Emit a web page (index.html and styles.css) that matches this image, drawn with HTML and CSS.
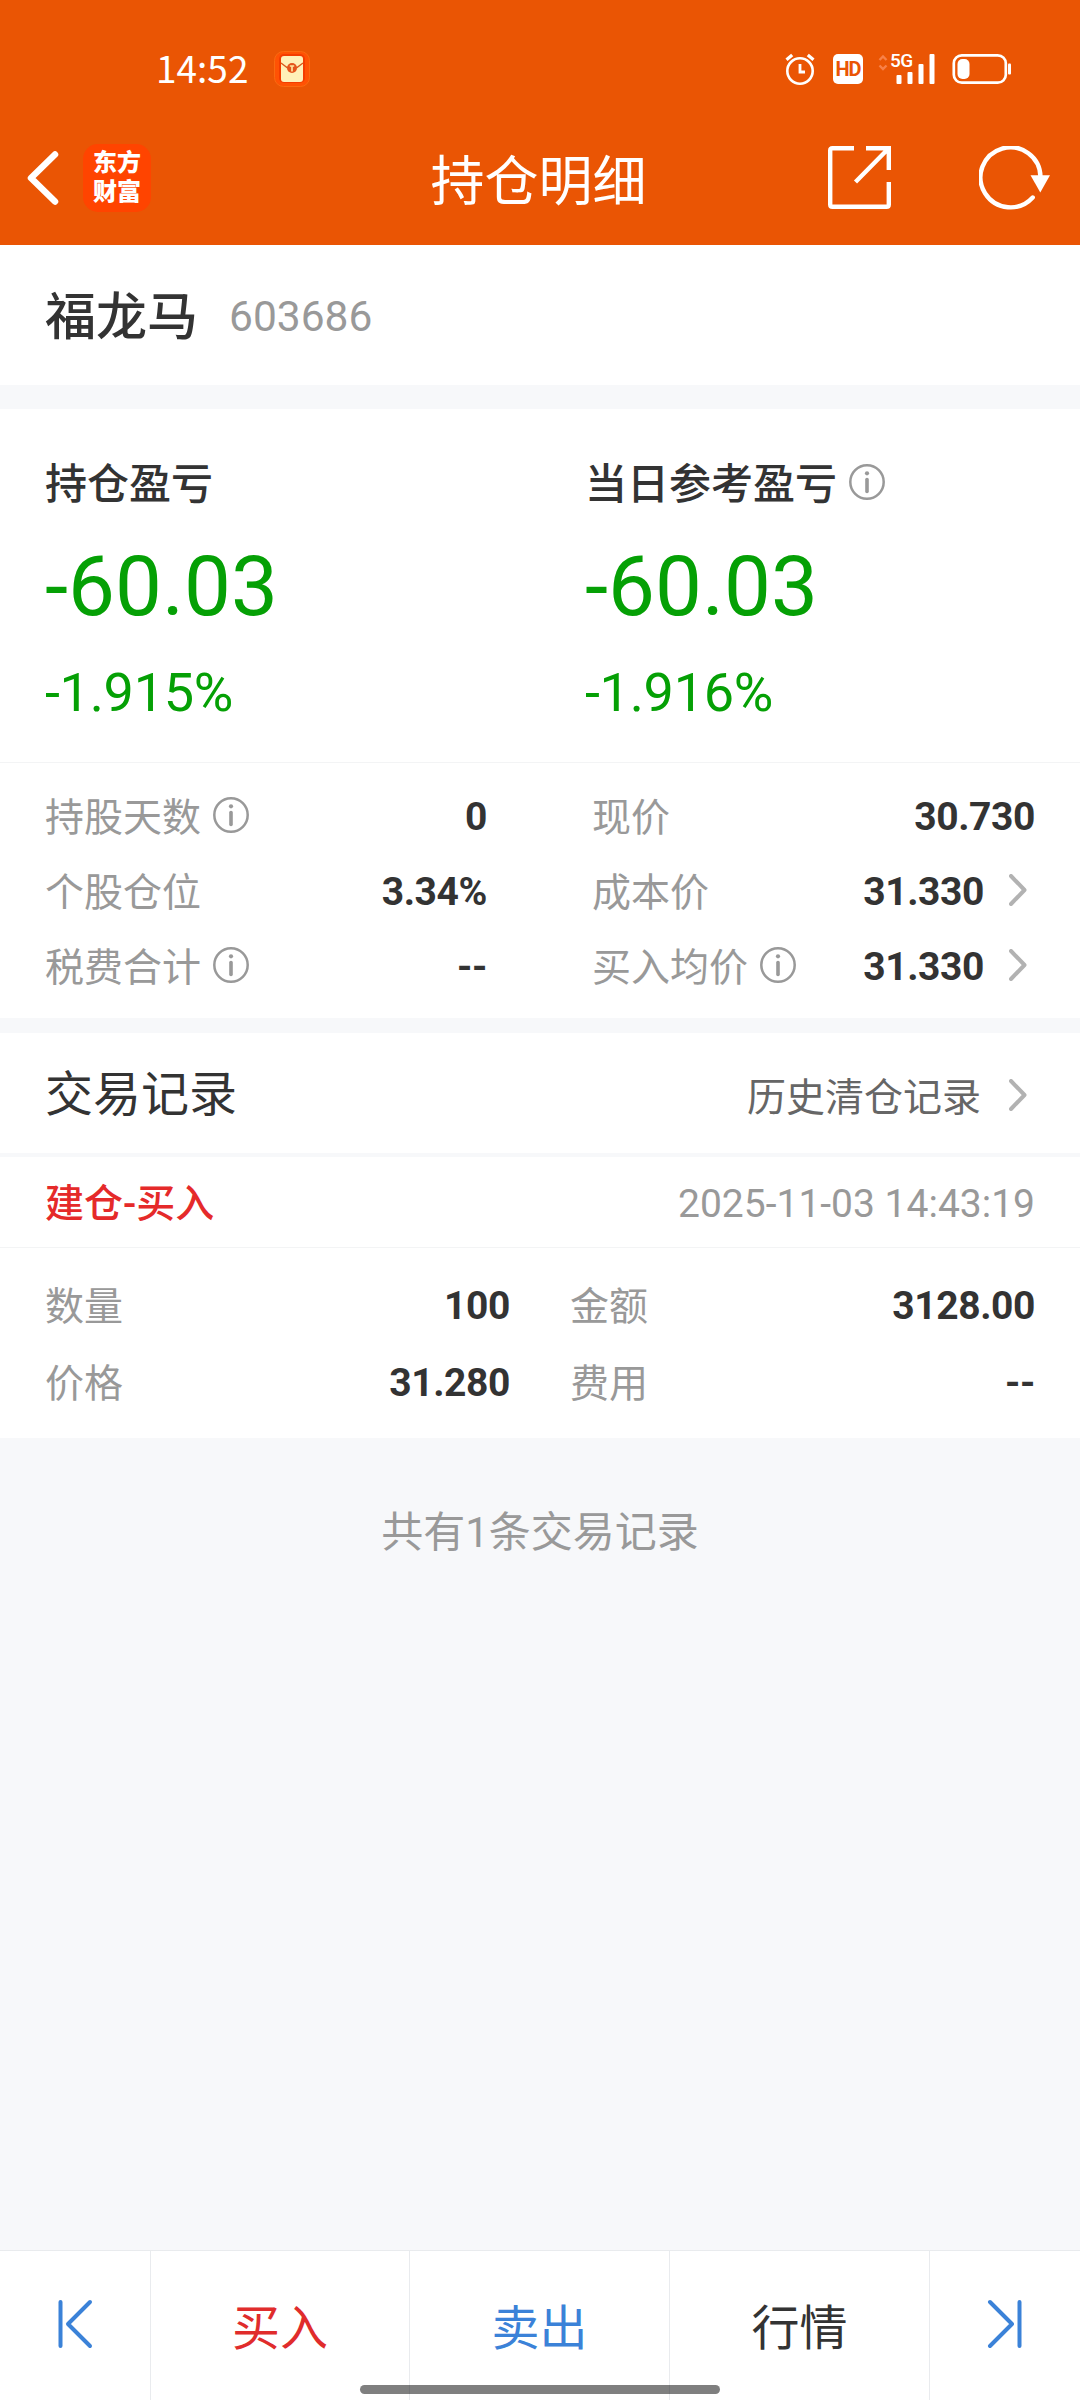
FILE: index.html
```html
<!DOCTYPE html>
<html lang="zh-CN">
<head>
  <meta charset="UTF-8">
  <title>持仓明细</title>
  <meta name="viewport" content="width=device-width, initial-scale=1.0">
  <link rel="stylesheet" href="styles.css">
</head>
<body>

  <!-- Shared icons -->
  <svg class="icon-defs" width="0" height="0">
    <symbol id="icon-info" viewBox="0 0 36 36">
      <circle cx="18" cy="18" r="16.7" fill="none" stroke="#999" stroke-width="2.5"/>
      <circle cx="18" cy="9.3" r="2.1" fill="#999"/>
      <path d="M18 15.5V27.5" stroke="#999" stroke-width="3.6" stroke-linecap="round"/>
    </symbol>
    <symbol id="icon-arrow" viewBox="0 0 18 32">
      <path d="M2 2L15.5 16L2 30" fill="none" stroke="#b2b2b2" stroke-width="4" stroke-linecap="round" stroke-linejoin="round"/>
    </symbol>
  </svg>

  <div class="page">
    <header class="header">
      <div class="status-bar">
        <span class="time">14:52</span>
        <svg class="status-app" width="36" height="36" viewBox="0 0 36 36">
          <rect x=".5" y=".5" width="35" height="35" rx="9" fill="#ff5204" stroke="#fb6a10"/>
          <rect x="5" y="3" width="26" height="29" rx="5" fill="#f43c00"/>
          <rect x="7" y="5" width="22" height="26" rx="3" fill="#fff0b8"/>
          <path d="M7 12L13 16.5H23L29 12" fill="none" stroke="#d8581c" stroke-width="1.3"/>
          <circle cx="18" cy="17" r="5" fill="#e5541c"/>
          <path d="M15.8 15H20.2M18 15V20.5" stroke="#ffe39a" stroke-width="1.7"/>
        </svg>
        <div class="status-icons">
          <svg width="30" height="32" viewBox="0 0 30 32" fill="none" stroke="#fff" stroke-width="2.6">
            <circle cx="15" cy="18" r="12.7"/>
            <path d="M15 11V19H20" stroke-width="2.8"/>
            <path d="M1.5 6.8L7.2 2M28.5 6.8L22.8 2" stroke-width="3.2"/>
          </svg>
          <span class="hd">HD</span>
          <div class="signal">
            <span class="signal-text">5G</span>
            <svg width="58" height="32" viewBox="0 0 58 32">
              <path d="M2.5 7L6 3.5L9.5 7M2.5 12.5L6 16L9.5 12.5" fill="none" stroke="#f88148" stroke-width="2.4"/>
              <g fill="#fff">
                <rect x="19.5" y="22" width="5" height="9" rx="1"/>
                <rect x="30.5" y="19" width="5" height="12" rx="1"/>
                <rect x="41.5" y="11" width="5" height="20" rx="1"/>
                <rect x="52.5" y="1" width="5" height="30" rx="1"/>
              </g>
            </svg>
          </div>
          <svg class="battery" width="59" height="32" viewBox="0 0 59 32">
            <rect x="1.8" y="2.3" width="52" height="27.4" rx="8" fill="none" stroke="#fff" stroke-width="2.7"/>
            <rect x="5.5" y="6" width="12" height="20" rx="5" fill="#fff"/>
            <rect x="56" y="10.5" width="3" height="11" rx="1" fill="#fff"/>
          </svg>
        </div>
      </div>

      <div class="nav-bar">
        <div class="nav-left">
          <svg width="34" height="56" viewBox="0 0 34 56">
            <path d="M29 4.5L5 28L29 51.5" fill="none" stroke="#fff" stroke-width="6.5" stroke-linecap="round" stroke-linejoin="round"/>
          </svg>
          <div class="logo"><span>东方</span><span>财富</span></div>
        </div>
        <h1 class="nav-title">持仓明细</h1>
        <div class="nav-right">
          <svg width="63" height="63" viewBox="0 0 63 63" fill="none" stroke="#fff" stroke-width="4.4">
            <path d="M26 2.2H4.5Q2.2 2.2 2.2 4.5V58.5Q2.2 60.8 4.5 60.8H58.5Q60.8 60.8 60.8 58.5V36"/>
            <path d="M38 2.2H60.8V24M60 3L27.5 36"/>
          </svg>
          <svg width="72" height="64" viewBox="0 0 72 64">
            <path d="M53.7 51.5A30 30 0 1 1 61.5 31" fill="none" stroke="#fff" stroke-width="4.4" stroke-linecap="round"/>
            <path d="M51.5 29.2H71L61.3 46.5Z" fill="#fff"/>
          </svg>
        </div>
      </div>
    </header>

    <section class="stock">
      <span class="stock-name">福龙马</span>
      <span class="stock-code">603686</span>
    </section>

    <section class="profit">
      <div class="profit-item">
        <div class="profit-title">持仓盈亏</div>
        <div class="profit-value">-60.03</div>
        <div class="profit-rate">-1.915%</div>
      </div>
      <div class="profit-item">
        <div class="profit-title">当日参考盈亏<svg class="info"><use href="#icon-info"/></svg></div>
        <div class="profit-value">-60.03</div>
        <div class="profit-rate">-1.916%</div>
      </div>
    </section>

    <section class="details">
      <div class="details-col">
        <div class="row"><span class="label">持股天数<svg class="info"><use href="#icon-info"/></svg></span><span class="value">0</span></div>
        <div class="row"><span class="label">个股仓位</span><span class="value">3.34%</span></div>
        <div class="row"><span class="label">税费合计<svg class="info"><use href="#icon-info"/></svg></span><span class="value">--</span></div>
      </div>
      <div class="details-col">
        <div class="row"><span class="label">现价</span><span class="value">30.730</span></div>
        <div class="row"><span class="label">成本价</span><span class="value">31.330</span><svg class="arrow"><use href="#icon-arrow"/></svg></div>
        <div class="row"><span class="label">买入均价<svg class="info"><use href="#icon-info"/></svg></span><span class="value">31.330</span><svg class="arrow"><use href="#icon-arrow"/></svg></div>
      </div>
    </section>

    <section class="records">
      <div class="records-head">
        <h2>交易记录</h2>
        <span class="history">历史清仓记录</span>
        <svg class="arrow"><use href="#icon-arrow"/></svg>
      </div>
      <div class="record-title">
        <span class="record-type">建仓-买入</span>
        <span class="record-time">2025-11-03 14:43:19</span>
      </div>
      <div class="record-body">
        <div class="row"><span class="label">数量</span><span class="value">100</span></div>
        <div class="row"><span class="label">金额</span><span class="value">3128.00</span></div>
        <div class="row"><span class="label">价格</span><span class="value">31.280</span></div>
        <div class="row"><span class="label">费用</span><span class="value">--</span></div>
      </div>
    </section>

    <p class="total">共有1条交易记录</p>

    <nav class="tab-bar">
      <div class="tab">
        <svg width="36" height="50" viewBox="0 0 36 50" fill="none" stroke="#3b82d8" stroke-width="4" stroke-linecap="round" stroke-linejoin="round">
          <path d="M3.5 3V47M33 3L11 25L33 47"/>
        </svg>
      </div>
      <div class="tab buy">买入</div>
      <div class="tab sell">卖出</div>
      <div class="tab">行情</div>
      <div class="tab">
        <svg width="36" height="50" viewBox="0 0 36 50" fill="none" stroke="#3b82d8" stroke-width="4" stroke-linecap="round" stroke-linejoin="round">
          <path d="M32.5 3V47M3 3L25 25L3 47"/>
        </svg>
      </div>
      <div class="home-indicator"></div>
    </nav>
  </div>

</body>
</html>
```

FILE: styles.css
```css
* {
  box-sizing: border-box;
}
body {
  margin: 0;
  font-family: Roboto, "Noto Sans CJK SC", sans-serif;
  line-height: 1.2;
  color: #333;
  background: #f7f8fa;
}
.icon-defs {
  display: block;
}
.page {
  width: 1080px;
  height: 2400px;
  display: flex;
  flex-direction: column;
}
section {
  background: #fff;
}

/* Header */
.header {
  height: 245px;
  background: #ea5504;
  color: #fff;
}
.status-bar {
  height: 110px;
  padding: 28px 69px 0 156px;
  display: flex;
  align-items: center;
}
.time {
  width: 118px;
  margin-bottom: 5px;
  font-family: "Noto Sans CJK SC", sans-serif;
  font-size: 37px;
  line-height: 40px;
}
.status-icons {
  margin-left: auto;
  display: flex;
  align-items: center;
}
.hd {
  width: 30px;
  height: 30px;
  margin: 0 14px 0 18px;
  border-radius: 5px;
  background: #fff;
  color: #ea5504;
  font: bold 20px/31px Roboto, sans-serif;
  letter-spacing: -1px;
  text-align: center;
}
.signal {
  position: relative;
  width: 58px;
  height: 32px;
}
.signal-text {
  position: absolute;
  left: 13px;
  top: -3px;
  font-size: 19px;
  font-weight: 500;
  letter-spacing: -0.5px;
}
.battery {
  margin-left: 17px;
}
.nav-bar {
  height: 135px;
  padding: 0 29px 0 26px;
  display: grid;
  grid-template-columns: 1fr auto 1fr;
  align-items: center;
}
.nav-left,
.nav-right {
  display: flex;
  align-items: center;
}
.nav-left {
  gap: 23px;
}
.nav-right {
  justify-content: flex-end;
  gap: 88px;
}
.logo {
  width: 68px;
  height: 68px;
  padding-top: 5px;
  border-radius: 15px;
  background: #ff4400;
  font-size: 24px;
  font-weight: 900;
  line-height: 29px;
  text-align: center;
}
.logo span {
  display: block;
}
.nav-title {
  margin: 11px 0 0;
  font-size: 54px;
  font-weight: 400;
  line-height: 64px;
}

/* Stock name */
.stock {
  height: 140px;
  padding: 6px 45px 0;
  display: flex;
  align-items: center;
  gap: 31px;
}
.stock-name {
  font-size: 51px;
  font-weight: 500;
}
.stock-code {
  margin-bottom: 3px;
  font-size: 42.5px;
  color: #999;
}

/* Profit */
.profit {
  height: 354px;
  margin-top: 24px;
  padding-top: 46px;
  display: grid;
  grid-template-columns: 1fr 1fr;
  border-bottom: 1px solid #f3f4f5;
}
.profit-item {
  padding-left: 45px;
}
.profit-title {
  display: flex;
  align-items: center;
  font-size: 42px;
  font-weight: 500;
  line-height: 62px;
  height: 60px;
}
.profit-value {
  margin-top: 24px;
  font-size: 83.5px;
  line-height: 96px;
  color: #05a005;
}
.profit-rate {
  margin-top: 26px;
  font-size: 54px;
  letter-spacing: -0.3px;
  line-height: 64px;
  color: #05a005;
}
.info {
  width: 36px;
  height: 36px;
  margin: 0 0 6px 12px;
}

/* Details */
.details {
  height: 255px;
  padding: 18px 45px 0;
  display: grid;
  grid-template-columns: 442px 443px;
  justify-content: space-between;
}
.row {
  height: 75px;
  display: flex;
  align-items: center;
  font-size: 39px;
}
.label {
  display: flex;
  align-items: center;
  color: #999;
}
.value {
  margin: 0 0 2px auto;
  font-weight: 700;
  letter-spacing: -0.4px;
}
.arrow {
  width: 18px;
  height: 32px;
  margin: 0 8px 7px 25px;
}

/* Records */
.records {
  margin-top: 15px;
}
.records-head {
  height: 124px;
  padding: 4px 45px 0;
  display: flex;
  align-items: center;
  border-bottom: 4px solid #f7f8fa;
}
.records-head h2 {
  margin: 0;
  font-size: 48px;
  font-weight: 400;
}
.records-head .arrow {
  margin-bottom: 1px;
}
.history {
  margin: 6px 3px 0 auto;
  font-size: 39px;
  color: #666;
}
.record-title {
  height: 91px;
  padding: 5px 45px 0;
  display: flex;
  align-items: center;
  justify-content: space-between;
  border-bottom: 1px solid #f3f4f5;
  font-size: 39px;
}
.record-type {
  font-weight: 500;
  color: #e52a2a;
}
.record-time {
  margin-bottom: 1px;
  color: #999;
}
.record-body {
  padding: 21px 45px 15px;
  display: grid;
  grid-template-columns: 465px 465px;
  column-gap: 60px;
}
.record-body .row {
  height: 77px;
}
.total {
  margin: 65px 0 0;
  font-size: 42px;
  line-height: 60px;
  text-align: center;
  color: #999;
}

/* Bottom tabs */
.tab-bar {
  position: relative;
  height: 150px;
  margin-top: auto;
  display: grid;
  grid-template-columns: 151px 259px 260px 260px 150px;
  background: #fff;
  border-top: 1px solid #e9ebee;
}
.tab {
  display: flex;
  align-items: center;
  justify-content: center;
  padding-top: 7px;
  border-right: 1px solid #e9ebee;
  font-size: 48px;
}
.tab svg {
  margin-bottom: 10px;
}
.tab:nth-child(5) {
  border-right: none;
}
.buy {
  color: #e02c2c;
}
.sell {
  color: #3b82d8;
}
.home-indicator {
  position: absolute;
  left: 360px;
  bottom: 6px;
  width: 360px;
  height: 9px;
  border-radius: 5px;
  background: rgba(0, 0, 0, 0.5);
}
```
